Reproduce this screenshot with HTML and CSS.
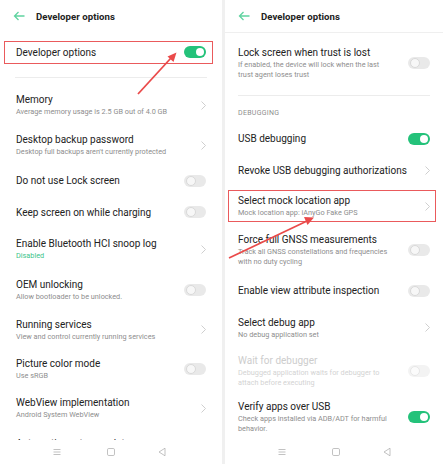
FILE: index.html
```html
<!DOCTYPE html>
<html>
<head>
<meta charset="utf-8">
<link rel="stylesheet" href="styles.css">
</head>
<body>
<div class="screen">
  <section class="phone left">
    <header class="bar">
      <svg class="back" viewBox="0 0 12 10"><path d="M11.5 5H1.5M5.5 1L1.5 5l4 4" fill="none" stroke="#5fd3a0" stroke-width="1.3"/></svg>
      <span class="bar-title">Developer options</span>
    </header>
    <div class="list">
      <div class="row hl h32 top-gap">
        <div class="text"><div class="t">Developer options</div></div>
        <span class="sw on"></span>
      </div>
      <div class="divider"></div>
      <div class="row h40">
        <div class="text"><div class="t">Memory</div><div class="s">Average memory usage is 2.5 GB out of 4.0 GB</div></div>
        <svg class="chev" viewBox="0 0 5 9"><path d="M0.5 0.5l4 4-4 4" fill="none" stroke="#c9c9c9" stroke-width="0.9"/></svg>
      </div>
      <div class="row h40">
        <div class="text"><div class="t">Desktop backup password</div><div class="s">Desktop full backups aren't currently protected</div></div>
        <svg class="chev" viewBox="0 0 5 9"><path d="M0.5 0.5l4 4-4 4" fill="none" stroke="#c9c9c9" stroke-width="0.9"/></svg>
      </div>
      <div class="row h31">
        <div class="text"><div class="t">Do not use Lock screen</div></div>
        <span class="sw"></span>
      </div>
      <div class="row h32">
        <div class="text"><div class="t">Keep screen on while charging</div></div>
        <span class="sw"></span>
      </div>
      <div class="row h42">
        <div class="text"><div class="t">Enable Bluetooth HCI snoop log</div><div class="s green">Disabled</div></div>
        <svg class="chev" viewBox="0 0 5 9"><path d="M0.5 0.5l4 4-4 4" fill="none" stroke="#c9c9c9" stroke-width="0.9"/></svg>
      </div>
      <div class="row h40">
        <div class="text"><div class="t">OEM unlocking</div><div class="s">Allow bootloader to be unlocked.</div></div>
        <span class="sw"></span>
      </div>
      <div class="row h39">
        <div class="text"><div class="t">Running services</div><div class="s">View and control currently running services</div></div>
        <svg class="chev" viewBox="0 0 5 9"><path d="M0.5 0.5l4 4-4 4" fill="none" stroke="#c9c9c9" stroke-width="0.9"/></svg>
      </div>
      <div class="row h39">
        <div class="text"><div class="t">Picture color mode</div><div class="s">Use sRGB</div></div>
        <span class="sw"></span>
      </div>
      <div class="row h40">
        <div class="text"><div class="t">WebView implementation</div><div class="s">Android System WebView</div></div>
        <svg class="chev" viewBox="0 0 5 9"><path d="M0.5 0.5l4 4-4 4" fill="none" stroke="#c9c9c9" stroke-width="0.9"/></svg>
      </div>
      <div class="row h24 peek">
        <div class="text"><div class="t">Automatic system updates</div></div>
      </div>
    </div>
    <nav class="nav">
      <svg class="nv n1" viewBox="0 0 10 10"><path d="M1.5 2.5h7M1.5 5h7M1.5 7.5h7" stroke="#b3b3b3" stroke-width="0.8"/></svg>
      <svg class="nv n2" viewBox="0 0 10 10"><rect x="1.5" y="1.5" width="7" height="7" rx="1.3" fill="none" stroke="#b3b3b3" stroke-width="0.8"/></svg>
      <svg class="nv n3" viewBox="0 0 10 10"><path d="M2 5l6-3.8v7.6z" fill="none" stroke="#b3b3b3" stroke-width="0.8" stroke-linejoin="round"/></svg>
    </nav>
  </section>

  <div class="gap"></div>

  <section class="phone right">
    <header class="bar bordered">
      <svg class="back" viewBox="0 0 12 10"><path d="M11.5 5H1.5M5.5 1L1.5 5l4 4" fill="none" stroke="#5fd3a0" stroke-width="1.3"/></svg>
      <span class="bar-title">Developer options</span>
    </header>
    <div class="list">
      <div class="row h56 lock">
        <div class="text"><div class="t">Lock screen when trust is lost</div><div class="s">If enabled, the device will lock when the last<br>trust agent loses trust</div></div>
        <span class="sw"></span>
      </div>
      <div class="divider r"></div>
      <div class="section">DEBUGGING</div>
      <div class="row h31">
        <div class="text"><div class="t">USB debugging</div></div>
        <span class="sw on"></span>
      </div>
      <div class="row h32">
        <div class="text"><div class="t">Revoke USB debugging authorizations</div></div>
        <svg class="chev" viewBox="0 0 5 9"><path d="M0.5 0.5l4 4-4 4" fill="none" stroke="#c9c9c9" stroke-width="0.9"/></svg>
      </div>
      <div class="row h40 hl2">
        <div class="text"><div class="t">Select mock location app</div><div class="s">Mock location app: iAnyGo Fake GPS</div></div>
        <svg class="chev" viewBox="0 0 5 9"><path d="M0.5 0.5l4 4-4 4" fill="none" stroke="#c9c9c9" stroke-width="0.9"/></svg>
      </div>
      <div class="row h48">
        <div class="text"><div class="t">Force full GNSS measurements</div><div class="s">Track all GNSS constellations and frequencies<br>with no duty cycling</div></div>
        <span class="sw"></span>
      </div>
      <div class="row h33">
        <div class="text"><div class="t">Enable view attribute inspection</div></div>
        <span class="sw"></span>
      </div>
      <div class="row h41">
        <div class="text"><div class="t">Select debug app</div><div class="s">No debug application set</div></div>
        <svg class="chev" viewBox="0 0 5 9"><path d="M0.5 0.5l4 4-4 4" fill="none" stroke="#c9c9c9" stroke-width="0.9"/></svg>
      </div>
      <div class="row h46 disabled">
        <div class="text"><div class="t">Wait for debugger</div><div class="s">Debugged application waits for debugger to<br>attach before executing</div></div>
        <span class="sw faint"></span>
      </div>
      <div class="row h46">
        <div class="text"><div class="t">Verify apps over USB</div><div class="s">Check apps installed via ADB/ADT for harmful<br>behavior.</div></div>
        <span class="sw on"></span>
      </div>
    </div>
    <nav class="nav">
      <svg class="nv n1" viewBox="0 0 10 10"><path d="M1.5 2.5h7M1.5 5h7M1.5 7.5h7" stroke="#b3b3b3" stroke-width="0.8"/></svg>
      <svg class="nv n2" viewBox="0 0 10 10"><rect x="1.5" y="1.5" width="7" height="7" rx="1.3" fill="none" stroke="#b3b3b3" stroke-width="0.8"/></svg>
      <svg class="nv n3" viewBox="0 0 10 10"><path d="M2 5l6-3.8v7.6z" fill="none" stroke="#b3b3b3" stroke-width="0.8" stroke-linejoin="round"/></svg>
    </nav>
  </section>

  <svg class="arrows" viewBox="0 0 443 464">
    <line x1="138" y1="94" x2="171" y2="58" stroke="#ea4a4a" stroke-width="1.8"/>
    <path d="M176.5 52.5L167.5 56.5L173.5 62z" fill="#ea4a4a"/>
    <line x1="229" y1="258" x2="307" y2="221" stroke="#ea4a4a" stroke-width="1.8"/>
    <path d="M314 217.5L304 217L307.5 225z" fill="#ea4a4a"/>
  </svg>
</div>
</body>
</html>
```
FILE: styles.css
```css
* { box-sizing: border-box; }
html, body { margin: 0; padding: 0; background: #fff; }
body { font-family: Roboto, "Noto Sans", "Liberation Sans", sans-serif; color: #222; }

.screen {
  position: relative;
  display: flex;
  width: 443px;
  height: 464px;
  overflow: hidden;
  background: #fff;
}

.phone {
  display: flex;
  flex-direction: column;
  height: 464px;
  background: #fff;
}
.left { width: 222px; }
.right { width: 218px; }
.gap { width: 3px; background: #f0f0f0; }

.bar {
  flex: none;
  height: 32px;
  display: flex;
  align-items: center;
  padding-left: 13px;
}
.bar.bordered { height: 33px; border-bottom: 1px solid #efefef; }
.back { width: 12px; height: 10px; margin-right: 11px; flex: none; }
.bar-title { font-size: 9.6px; font-weight: 700; color: #222; letter-spacing: 0.05px; }

.list { flex: 1; min-height: 0; overflow: hidden; }

.row {
  position: relative;
  display: flex;
  align-items: center;
  justify-content: space-between;
}
.left .row { padding: 0 16px 0 16px; }
.right .row { padding: 0 13px 0 13px; }

.h24 { height: 24px; }
.h31 { height: 31px; }
.h32 { height: 32px; }
.h33 { height: 33px; }
.h39 { height: 39px; }
.h40 { height: 40px; }
.h41 { height: 41px; }
.h42 { height: 42px; }
.h46 { height: 46px; }
.h48 { height: 48px; }
.h56 { height: 56px; }

.top-gap { margin-top: 4px; }
.right .row.lock { padding-top: 3px; }
.row.peek { align-items: flex-start; padding-top: 9px; }

.t { font-size: 10px; line-height: 13px; color: #222; white-space: nowrap; }
.s { font-size: 7.3px; line-height: 10px; color: #8e8e8e; margin-top: 1px; white-space: nowrap; }
.s.green { color: #3cc48a; }
.disabled .t { color: #cdcdcd; }
.disabled .s { color: #d3d3d3; }

.divider { height: 1px; background: #ececec; margin: 9px 15px 7px 15px; }
.divider.r { margin: 6px 13px 0 13px; }

.section {
  font-size: 7px;
  line-height: 10px;
  color: #8e8e8e;
  letter-spacing: 0.3px;
  padding: 12px 13px 5px 13px;
}

.sw {
  flex: none;
  width: 22px;
  height: 12px;
  border-radius: 6px;
  background: #e9e9e9;
  display: flex;
  align-items: center;
  padding: 0 2px;
}
.sw::after {
  content: "";
  width: 8px;
  height: 8px;
  border-radius: 50%;
  background: #f7f7f7;
  border: 1px solid #d9d9d9;
}
.sw.on { background: #24c27a; justify-content: flex-end; }
.sw.on::after { background: #fff; border: none; }
.sw.faint { background: #f3f3f3; }
.sw.faint::after { border-color: #e7e7e7; background: #fbfbfb; }

.chev { width: 5px; height: 9px; flex: none; }

.hl::before {
  content: "";
  position: absolute;
  left: 4px;
  right: 9px;
  top: 5px;
  bottom: 4px;
  border: 1.5px solid #ea5a5c;
}
.hl2::before {
  content: "";
  position: absolute;
  left: 3px;
  right: 7px;
  top: 4px;
  bottom: 4px;
  border: 1.5px solid #ea5a5c;
}

.nav {
  flex: none;
  height: 24px;
  display: flex;
  align-items: center;
  background: #fff;
}
.nv { width: 10px; height: 10px; flex: none; }
.n1 { margin-left: 52px; }
.n2 { margin-left: 44px; }
.n3 { margin-left: 41px; }

.arrows {
  position: absolute;
  left: 0;
  top: 0;
  width: 443px;
  height: 464px;
  pointer-events: none;
}
```
